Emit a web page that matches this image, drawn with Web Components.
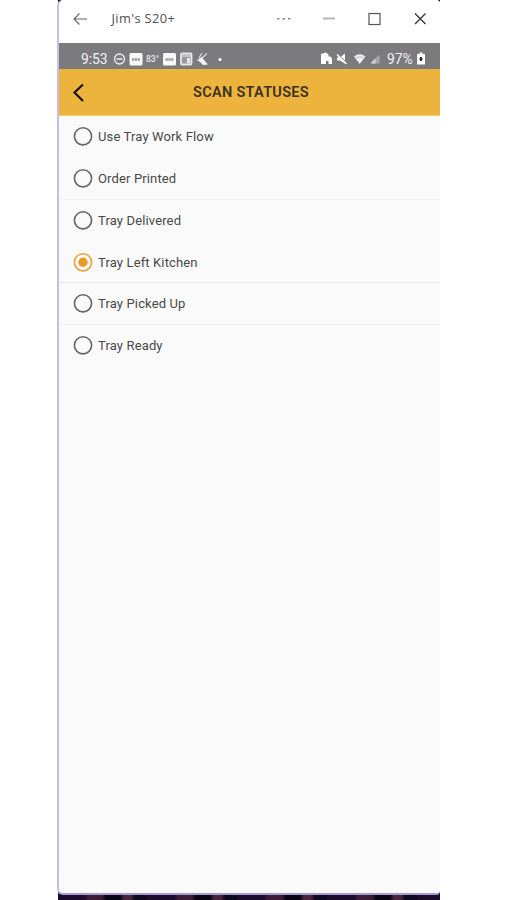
<!DOCTYPE html>
<html lang="en"><head><meta charset="utf-8"><title>Scan Statuses</title>
<style>html,body{margin:0;height:900px;overflow:hidden;background:#fff}body{font-family:Roboto,"Liberation Sans",sans-serif}</style></head>
<body>
<phone-window>
<title-bar>Jim's S20+</title-bar>
<status-bar time="9:53" battery="97%"></status-bar>
<app-header>SCAN STATUSES</app-header>
<status-list>
<status-option line="#f5f5f5">Use Tray Work Flow</status-option>
<status-option line="#f1f1f1">Order Printed</status-option>
<status-option line="#fafafa">Tray Delivered</status-option>
<status-option line="#e9e9e9" checked>Tray Left Kitchen</status-option>
<status-option line="#efefef">Tray Picked Up</status-option>
<status-option line="#fafafa">Tray Ready</status-option>
</status-list>
</phone-window>
<script>
const define=(name,html)=>customElements.define(name,class extends HTMLElement{
 constructor(){super();this.attachShadow({mode:'open'}).innerHTML=typeof html==='function'?html(this):html;}
});
define('phone-window',`<style>
:host{display:block;box-sizing:border-box;width:383px;height:900px;margin-left:57px;padding-bottom:5px;
background:linear-gradient(#fff,#fff) 0 0/1px 100% no-repeat,repeating-linear-gradient(90deg,#1c0b2c 0 27px,#3b1b38 31px 45px,#080414 49px 63px,#48243f 67px 74px,#100820 78px 90px)}
.win{box-sizing:border-box;height:895px;display:flex;flex-direction:column;overflow:hidden;background:#fafafa;border-left:2px solid #c6bdef;border-bottom:2px solid #a59bd0;border-radius:6px 4px 4px 6px}
</style><div class="win"><slot></slot></div>`);
define('title-bar',`<style>
:host{display:flex;flex:none;height:43px;background:#fff;color:#505050;font:12.9px/37px "Open Sans","Noto Sans",sans-serif}
.back{width:52.500px;flex:none}.name{width:149.500px;letter-spacing:.35px}svg{display:block}
</style><div class="back"><svg width="52" height="38" fill="none" stroke="#666" stroke-width="1.1"><path d="M28 19H15M20.5 13.5L15 19l5.500 5.500"/></svg></div><div class="name"><slot></slot></div>
<svg width="179" height="38" fill="none"><g fill="#858585"><rect x="16" y="18" width="2.500" height="1.500"/><rect x="21.500" y="18" width="2.500" height="1.500"/><rect x="27" y="18" width="2.500" height="1.500"/></g><path d="M62 18.500H74" stroke="#b5b5b5" stroke-width="2"/><rect x="108" y="13.500" width="11" height="11" stroke="#555" stroke-width="1.200"/><path d="M154 13.500l10.500 10.500M164.500 13.500L154 24" stroke="#333" stroke-width="1.300"/></svg>`);
define('status-bar',el=>`<style>
:host{display:flex;flex:none;height:26px;background:#7b7b7d;color:#f3f3f3;font-size:13.8px;line-height:32px}
.time{width:54px;box-sizing:border-box;padding-left:22px;white-space:nowrap}.left{width:207px}.pct{width:30px;white-space:nowrap}svg{display:block;flex:none}
</style><div class="time">${el.getAttribute('time')}</div>
<svg class="left" height="26" viewBox="0 0 207 26"><g fill="none" stroke="#eee"><circle cx="6.500" cy="16" r="5" stroke-width="1.300"/><path d="M3.500 16h6" stroke-width="1.600"/></g>
<g fill="#f8f8f8"><rect x="16.500" y="10" width="13" height="12.500" rx="1.500"/><rect x="50" y="10" width="13" height="12.500" rx="1.500"/></g><path d="M19 16.500h8M52.500 16.500h8" stroke="#999" stroke-width="2.500" stroke-dasharray="2.300 .500"/>
<text x="33" y="18.500" fill="#e8e8e8" font-size="8.500" font-weight="500" textLength="13" lengthAdjust="spacingAndGlyphs">83°</text>
<rect x="68" y="10.500" width="10.500" height="11" rx="1" fill="#999" stroke="#e8e8e8" stroke-width="1.800"/><path d="M69 13h9" stroke="#eee"/><path d="M74 15h3v5h-3z" fill="#e8e8e8"/>
<path d="M86 15l3-5M89 15l5-4.500" stroke="#ddd" stroke-width="1.200" fill="none"/><path d="M84 17l5-3 2 3 4 4.500-5 .5-3-3z" fill="#f2f2f2"/><circle cx="107" cy="16.500" r="1.600" fill="#fff"/></svg>
<svg width="67" height="26" viewBox="0 0 67 26"><path d="M1 11l5-1.500 2.500 2v2h2l1.500 2V21H8.500v-3H6v3H1z" fill="#fff"/><path d="M17 14.500h3l5-4v10l-5-3h-3z" fill="#fff"/><path d="M17.500 10.500l9.500 9.500" stroke="#7b7b7d" stroke-width="1"/><path d="M17 11.500l9.500 9.500" stroke="#fff" stroke-width="1.500"/>
<path d="M34 13.500Q39.700 9 45.500 13.500L39.700 21z" fill="#eee"/><path d="M36 15Q39.700 12.500 43.500 15" fill="none" stroke="#aaa" stroke-width=".7"/><path d="M50.500 20.500l9-9v9z" fill="#a5a5a7"/><path d="M50.500 20.500l5-5v5z" fill="#d5d5d5"/></svg>
<div class="pct">${el.getAttribute('battery')}</div><svg width="20" height="26"><path d="M0 11h2.500V9.500h3V11h2.500v10.500H0z" fill="#fff"/><path d="M4 14v4M2.500 16h3" stroke="#333" stroke-width="2"/></svg>`);
define('app-header',`<style>
:host{display:grid;grid-template-columns:40px 1fr 40px;flex:none;height:47px;box-sizing:border-box;border-bottom:1px solid #f3cd69;background:#ecb43c;color:#3b3023;font-weight:600;font-size:14.500px;letter-spacing:.3px;line-height:48px;text-align:center;white-space:nowrap}
.title{padding-left:3px}
</style><svg width="40" height="46"><path d="M24 15.500L15.500 23.500l8.500 8.500" fill="none" stroke="#161008" stroke-width="2.200"/></svg><div class="title"><slot></slot></div>`);
define('status-list',`<style>:host{display:block;flex:1}</style><slot></slot>`);
define('status-option',el=>`<style>
:host{display:flex;align-items:center;box-sizing:border-box;height:41.750px;padding-left:14px;color:#484848;font-size:13px;letter-spacing:.14px;border-bottom:1px solid ${el.getAttribute('line')}}
svg{flex:none;margin-right:5px}.label{padding-top:1px}
</style><svg width="20" height="20" viewBox="0 0 20 20"><circle cx="10" cy="10.300" r="8.600" fill="none" stroke="${el.hasAttribute('checked')?'#e9a238':'#666'}" stroke-width="1.600"/>${el.hasAttribute('checked')?'<circle cx="10" cy="10.300" r="4.700" fill="#e99a25"/>':''}</svg><span class="label"><slot></slot></span>`);
</script></body></html>
